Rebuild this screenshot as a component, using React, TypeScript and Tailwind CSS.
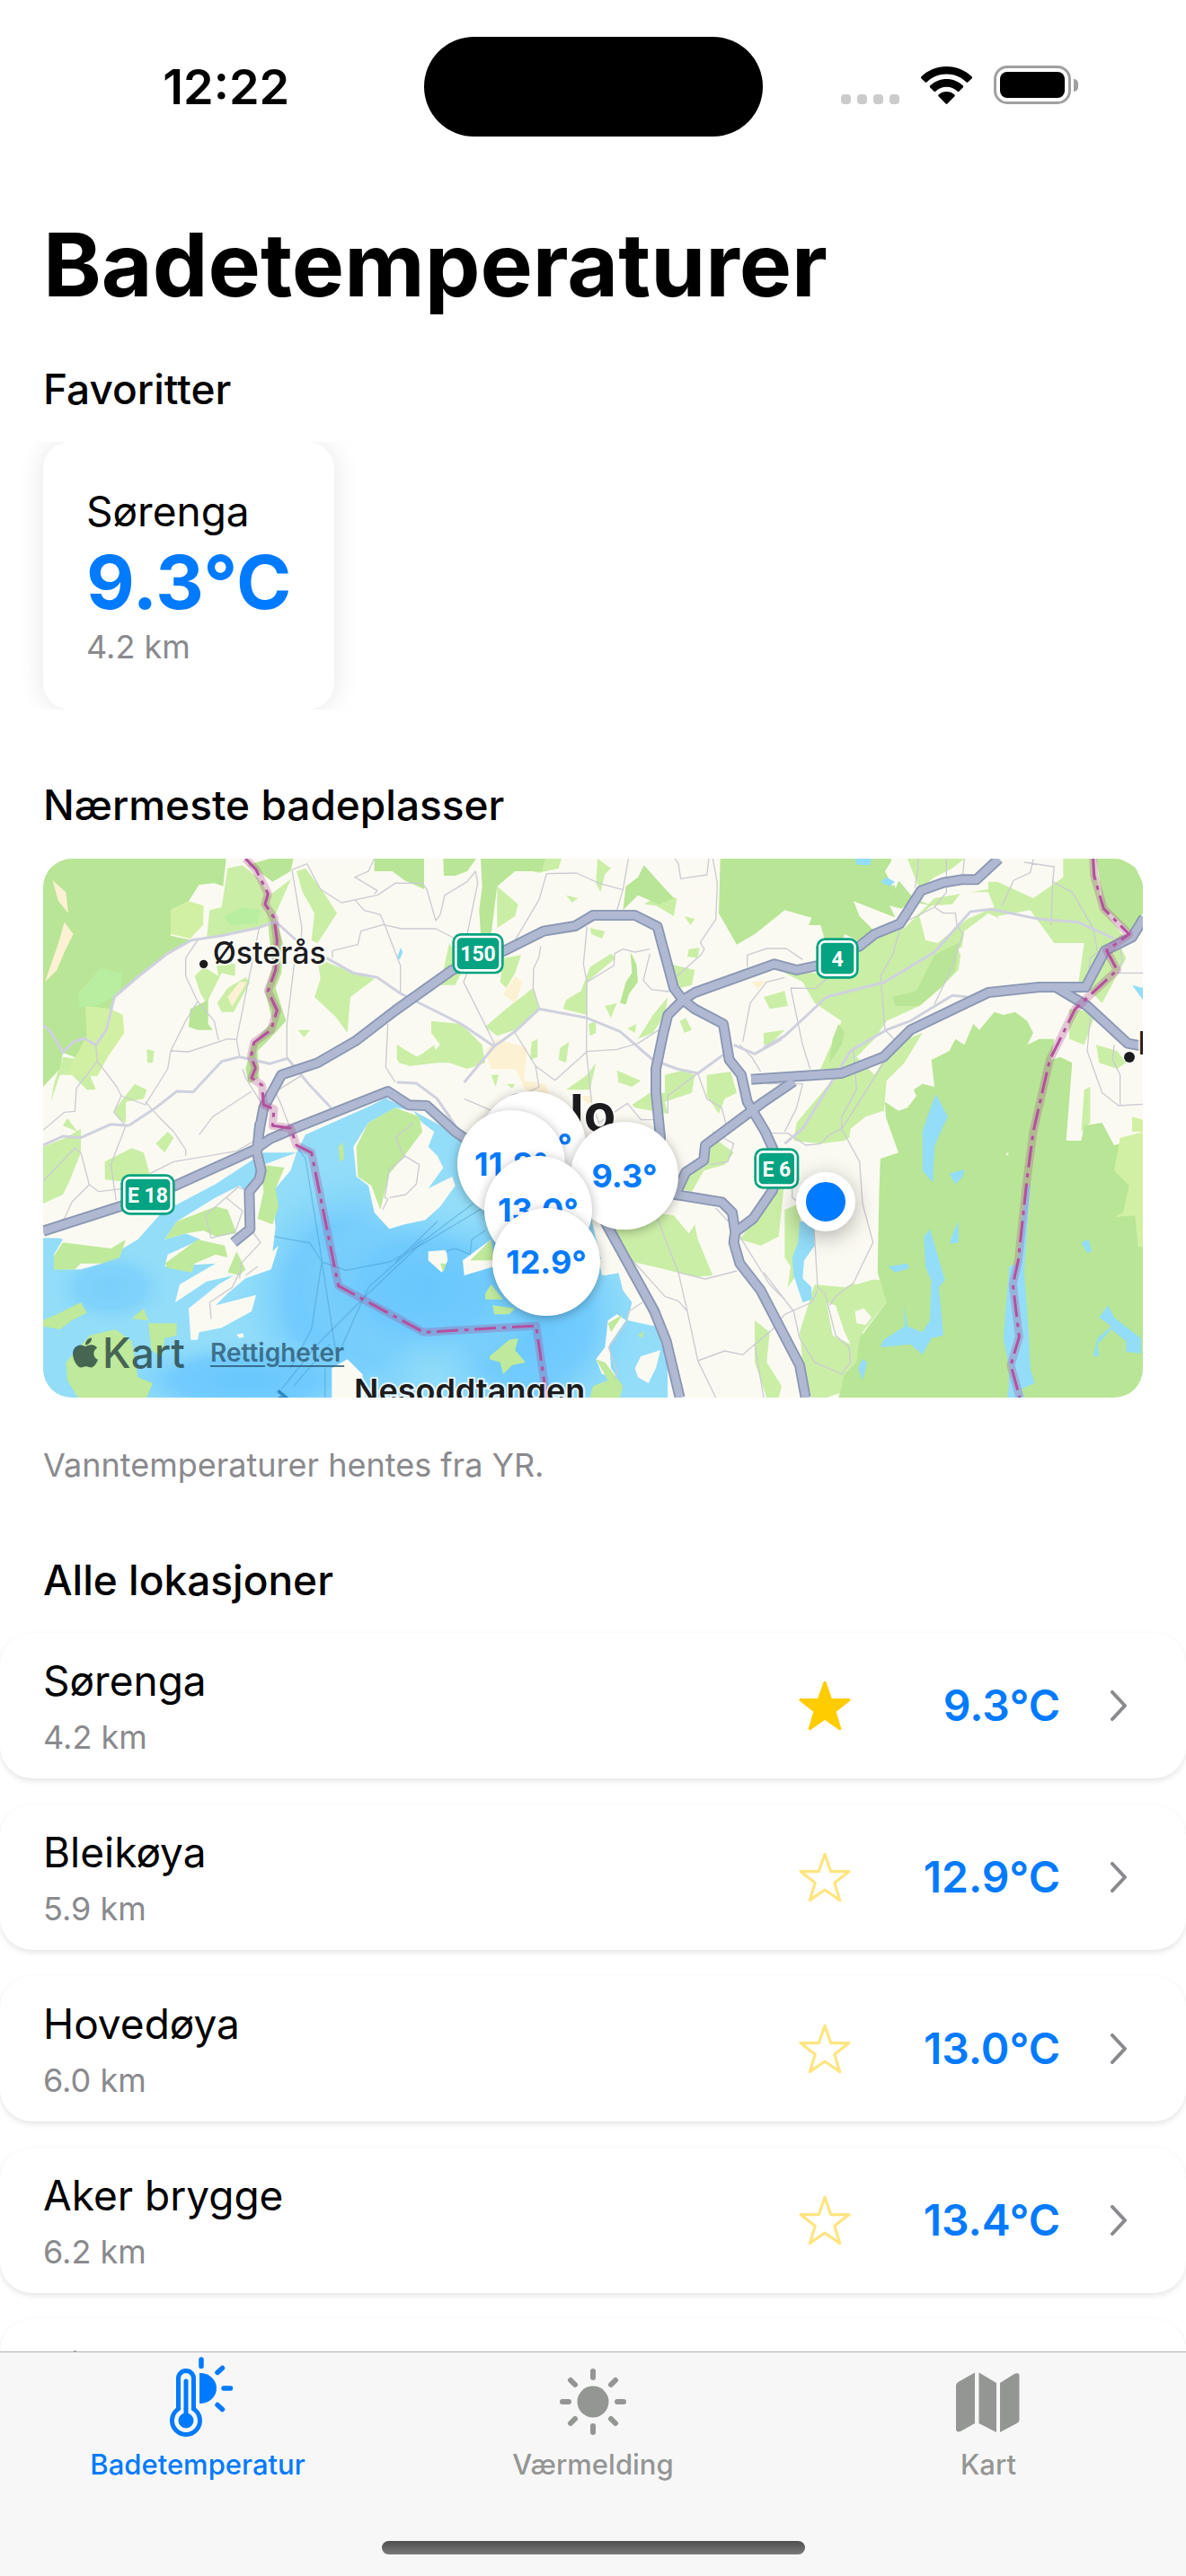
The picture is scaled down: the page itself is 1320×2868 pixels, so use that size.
import { useState } from 'react';
import { FaApple } from 'react-icons/fa';

type Spot = { name: string; distance: string; temp: string };

const spots: Spot[] = [
  { name: 'Sørenga', distance: '4.2 km', temp: '9.3°C' },
  { name: 'Bleikøya', distance: '5.9 km', temp: '12.9°C' },
  { name: 'Hovedøya', distance: '6.0 km', temp: '13.0°C' },
  { name: 'Aker brygge', distance: '6.2 km', temp: '13.4°C' },
  { name: 'Tjuvholmen', distance: '6.6 km', temp: '11.8°C' },
];

// ---- Map data, in map units (three per pixel) ----

const forest = [
  'M24 18H635L625 110 595 100 545 105 510 160 450 190V275L520 290 440 335 262 480 235 590 200 600 150 690 90 665 80 720 24 780Z',
  'M2285 18H2855L2870 120 2880 90 2930 150 2990 175 2920 160 2890 185 2850 175 2870 215 2730 160 2750 210 2800 260 2760 300 2700 270 2680 330 2640 310 2620 240 2580 240 2590 215 2500 190 2450 230 2400 270 2340 305 2320 270 2280 200Z',
  'M2820 1000L2840 930 2835 830 2880 860 2910 850 2940 810 2930 790 2960 770 3000 780 2990 690 3050 660 3070 620 3100 640 3130 570 3150 590 3200 530 3230 540 3270 530 3310 560 3330 600 3310 640 3350 620 3400 620 3390 690 3420 680 3460 700 3440 960 3490 960 3500 910 3560 900 3600 975 3700 950V1818H2680L2700 1740 2740 1700 2750 1620 2840 1500 2810 1400 2815 1150Z',
  'M780 18H860L850 60 790 95 735 55 705 40Z',
  'M1130 18H1296V120L1230 90 1190 60 1130 60Z',
  'M1360 18H1470L1440 60 1400 75 1362 75Z',
  'M1485 18H1700L1690 60 1600 60 1540 110 1530 190 1520 270H1485L1480 190 1490 110Z',
  'M2030 40L2075 90 2130 150 2080 170 2010 140 1960 190 1970 110 2010 80Z',
  'M3540 18H3620L3670 45 3696 100V200L3660 270 3610 220 3565 180Z',
  'M1985 330L2005 370 2010 430 1980 470 1970 505 1950 500 1970 430 1990 400Z',
  'M3000 340L3080 300 3070 390 3020 450 2950 510 2870 510 2860 480 2940 460Z',
  'M2680 570L2700 600 2690 640 2650 700 2660 620Z',
  'M770 190L800 215 825 300 820 400 800 450 835 560 780 620 740 660 745 750 710 770 700 720 720 640 790 560 765 460 790 380Z',
  'M515 520L575 490 575 570 590 590 540 590 510 580Z',
];

const park = [
  'M640 50L690 40 740 80 780 140 860 80 850 90 790 225 740 250 570 285 580 190 620 180Z',
  'M870 60L900 50 960 130 1005 200 940 300 920 290 930 200 890 130Z',
  'M940 350L1010 380 1130 420 1050 480 1040 600 1000 545 930 480 950 420Z',
  'M610 410L560 380 530 410 550 470 570 500 620 400 665 410 665 370 600 360Z',
  'M620 530L660 530 715 430 700 415 640 450 605 500Z',
  'M1620 18H1755L1745 50 1680 65 1620 50Z',
  'M1875 18L1920 50 1900 70 1885 130 1870 100Z',
  'M2080 140L2140 150 2130 210 2070 175 2030 170Z',
  'M1380 300L1430 380 1400 440 1350 440Z M1540 110L1610 170 1600 210 1540 250Z',
  'M1560 350L1620 340 1600 400 1570 450 1550 430Z',
  'M1850 380L1920 335 1935 350 1840 430 1840 540 1760 520 1770 490 1820 460Z',
  'M1500 580L1570 520 1660 450 1680 520 1600 590 1540 610Z',
  'M1320 560L1420 570 1490 640 1500 700 1440 720 1380 700 1290 700 1350 640 1320 600Z',
  'M1210 640L1250 690 1290 670 1330 640 1340 700 1250 710 1210 700Z',
  'M2110 480L2100 540 2060 600 2010 620 2060 540Z',
  'M2100 740L2160 725 2200 740 2190 800 2100 830 2110 870 2000 850 1990 840 2050 800 2100 800Z',
  'M2240 740L2320 730 2340 800 2300 820 2280 870 2240 810Z',
  'M2500 400L2620 400 2700 380 2780 290 2900 250 3000 150 3180 120 3180 95 3210 95 3330 150 3430 80 3430 18H3530L3560 180 3640 290 3560 340 3540 440 3400 430 3380 330 3280 250 3180 200 3100 260 3080 390 3020 450 2950 510 2840 560 2800 620 2700 720 2620 720 2690 560 2600 500 2560 430Z',
  'M2910 18H3100L3060 50 3000 80 2950 120Z',
  'M2430 480L2500 460 2510 510 2450 520Z M2430 600L2500 590 2450 640 2430 640Z',
  'M2640 780L2740 680 2800 740 2860 640 2960 600 2900 700 2840 760 2820 1000 2760 920 2700 960 2620 970 2530 960 2540 900Z',
  'M3500 250L3600 270 3640 350 3560 500 3480 420Z M3450 520L3540 530 3500 640 3450 620Z',
  'M3540 640L3610 660 3640 700 3610 720 3550 700Z M3500 790L3520 780 3520 900 3490 930Z',
  'M24 980L100 950 150 920 150 1000 110 1100 90 1140 24 1170Z',
  'M230 1030L320 985 360 1000 380 1070 330 1100 230 1090Z',
  'M400 970L440 930 460 950 430 1000Z M90 910L105 885 140 930Z M260 860L330 770 370 790 360 820 300 830 300 900 280 890Z',
  'M90 680L160 690 200 790 170 790 120 740 80 740 50 830 60 770Z',
  'M370 655L395 660 390 700 372 700Z M875 590L915 590 895 615Z M1205 640L1290 690 1250 710 1205 690Z',
  'M1990 1240L2060 1200 2130 1210 2180 1270 2200 1240 2210 1290 2260 1410 2200 1415 2060 1380 1970 1360 1930 1260Z',
  'M2250 940L2330 1000 2300 1040 2230 1060 2190 1130 2150 1120 2200 1050Z',
  'M2450 1120L2500 1090 2480 1280 2420 1310 2350 1290 2400 1220Z',
  'M2400 1560L2450 1600 2440 1700 2490 1780 2480 1818H2440L2400 1700Z',
  'M2600 1440L2700 1450 2780 1420 2840 1430 2840 1500 2760 1600 2770 1700 2720 1790 2640 1818H2590L2560 1700 2550 1600Z',
  'M2500 1190L2550 1170 2560 1380 2510 1450 2520 1380 2500 1350Z',
  'M1845 570L1870 560 1870 600 1850 610Z M2150 560L2170 550 2190 590 2165 600Z M1975 585L2005 570 2000 600Z',
  'M1840 740L1870 700 1850 790 1770 790Z M1940 725L2020 760 1990 780 1945 765Z M1750 650L1780 630 1770 700 1745 690Z',
  'M1655 630L1675 620 1675 680 1650 690Z M1520 740L1545 740 1535 780Z M1570 770L1600 770 1590 785Z',
  'M1770 140L1810 150 1790 165Z M1850 250L1900 260 1890 285 1855 270Z M2165 210L2200 220 2185 240Z M2180 320L2215 315 2210 350 2175 345Z',
  'M2120 370L2200 390 2190 440 2150 450Z M1900 510L1940 500 1920 550Z',
];

const meadow = [
  'M450 190L510 160 560 175 558 240 515 285 450 270Z',
  'M165 510L250 520 290 540 295 600 240 680 205 745 100 740 170 610Z',
  'M3700 930L3620 950 3600 1060 3650 1110 3630 1200 3600 1215 3670 1210 3680 1315H3700Z',
  'M3660 880L3696 890V930H3660Z',
];

const clearings = [
  'M2835 60L2860 20 2910 18 2900 80 2860 110Z',
  'M2950 210L2990 175 3060 170 3090 130 3180 130 3200 180 3110 220 3060 260 3010 300 2970 290Z',
  'M3080 320L3140 280 3170 310 3150 370 3100 380Z',
  'M3210 210L3320 190 3400 300 3500 300 3480 440 3370 440 3330 350 3260 280Z',
  'M3240 1000L3250 1002 3240 1010Z M2700 1100L2790 1090 2810 1300 2810 1420 2740 1440 2640 1420 2620 1340 2650 1200Z',
  'M2720 920L2770 880 2830 860 2880 1000 2820 1020 2800 1100 2750 1110 2710 1000Z',
  'M2735 1530L2765 1520 2790 1550 2770 1575 2740 1570Z M2640 1500L2670 1510 2700 1600 2720 1640 2660 1610Z',
];

const sand = [
  'M55 90L100 130 108 200 75 160Z M95 230L125 270 95 330 70 390 30 430 75 300Z',
  'M640 480L680 430 705 430 655 512Z',
  'M1500 660L1540 620 1640 650 1630 760 1700 770 1720 820 1640 800 1600 720 1520 720Z',
  'M1560 470L1600 410 1625 430 1600 500Z M2390 430L2440 425 2410 455Z M1810 810H1860L1850 840Z',
];

const land = [
  'M710 1140L760 1040 870 1000 850 1060 790 1130 800 1250 790 1330 810 1310 785 1390 700 1420 640 1470 600 1510 735 1475 720 1530 620 1585 545 1600 540 1625H517L510 1520 610 1440 660 1410 570 1430 465 1500 480 1440 600 1370 430 1380 440 1340 550 1290 500 1270 430 1290 470 1230 600 1150 680 1110Z',
  'M24 1260L340 1290 290 1320 220 1370 150 1390H60L60 1340 90 1290Z',
  'M1060 980L1070 1080 1110 1110 1130 1200 1180 1255 1230 1240 1300 1225 1350 1180 1400 1110 1390 1080 1310 1120 1360 1050 1340 1010 1310 980 1330 930 1290 900 1260 860 1200 850 1110 900Z',
  'M1310 1330L1370 1325 1375 1360 1355 1400 1310 1360Z M1425 1360L1520 1290 1530 1380 1430 1410Z',
  'M1875 1260L1960 1400 1890 1410 1880 1360 1920 1330 1880 1300Z',
  'M1910 1560L1940 1540 1970 1560 1915 1640 1920 1720 1940 1750 1890 1740 1870 1690 1900 1650Z',
  'M2000 1720L2020 1680 2085 1660 2070 1720 2045 1770 2010 1750Z M988 1720L1040 1690 1090 1740 1100 1818H988Z',
  'M670 1608L690 1603 695 1615 680 1620Z',
];

const islands = [
  'M60 1345L90 1300 250 1320 300 1290 280 1350 220 1370 150 1370 130 1390H60Z',
  'M430 1290L470 1230 600 1180 640 1190 670 1270 600 1280 560 1260 500 1270Z',
  'M430 1370L540 1290 630 1310 640 1350 600 1340 530 1370 520 1400 440 1385Z',
  'M750 1040L830 1050 800 1120 810 1180 790 1240 740 1220 760 1130Z',
  'M1070 980L1110 900 1200 850 1280 880 1290 930 1230 1010 1180 1070 1150 1190 1120 1110 1075 1080Z',
  'M24 1560L70 1540 150 1500 170 1535 120 1560 80 1590 24 1580Z M320 1555L360 1520 375 1560Z M375 1570L470 1570V1610L430 1620 420 1680 385 1660Z',
  'M100 1700L180 1610 265 1590 320 1630 340 1750 390 1770 370 1818H140L105 1760Z',
  'M1500 1470L1520 1440 1560 1490 1500 1490Z M1525 1510L1600 1520 1580 1540 1530 1540Z',
  'M1515 1680L1580 1625 1610 1620 1600 1660 1635 1700 1590 1710 1560 1740 1550 1700 1515 1690Z',
  'M1450 1360L1520 1290 1530 1360Z M1350 1370H1370L1360 1400Z M1910 1570L1960 1540 1920 1600Z',
  'M1870 1690L1900 1700 1960 1780 1950 1818H1850L1860 1780 1910 1760Z M640 1400L670 1330 700 1390 680 1410Z',
  'M1010 980L1025 965 1030 1020 1015 1030Z M2010 1610L2030 1595 2025 1620Z',
];

const lakes = [
  'M1015 900L1170 815 1180 830 1100 900 1060 940 960 930Z',
  'M2735 18H2790L2785 40 2740 38Z M2820 95L2840 80 2868 95 2850 110Z',
  'M2980 870L3005 805 3045 880 3030 910 3000 980 2995 1100 2960 1060V930Z',
  'M3050 1070L3100 1055 3095 1080 3070 1105Z M3065 1260L3080 1230V1300L3050 1305Z',
  'M2965 1280L2985 1255 3010 1340 3035 1425 3015 1450 3030 1610 2990 1620 2960 1675 2920 1640 2820 1650 2830 1625 2900 1580V1510L2910 1580 2960 1600 2985 1560 2990 1430 2970 1380Z',
  'M2845 1380L2910 1370 2915 1385 2870 1400Z M2745 1720L2760 1690 2775 1700 2760 1760Z',
  'M2550 1230H2600L2600 1310 2565 1360 2560 1420 2590 1450 2590 1490 2560 1500 2530 1410 2525 1350 2545 1300Z',
  'M3310 1110H3320L3300 1400 3315 1600 3320 1720 3335 1770 3290 1790 3300 1818H3245L3250 1720 3230 1620 3250 1380 3280 1370 3290 1230Z',
  'M3490 1300L3515 1290 3525 1330 3510 1335Z M3660 440L3696 450V490Z M1205 350L1218 315 1225 330 1215 355Z',
  'M3550 1550L3580 1510 3600 1550 3690 1620V1670L3640 1665 3640 1630 3590 1590 3545 1640 3550 1680 3530 1680 3545 1620 3590 1580Z',
];

const majorStreets = [
  'M24 575L45 590 90 665 125 630 160 618 200 640 235 590 262 480 350 405 440 335 520 290 620 275 740 250 800 228 880 300',
  'M970 350L1060 400 1140 415 1220 470 1300 510 1420 570 1530 645 1600 595 1680 520 1840 550 1950 595 2060 690 2140 720 2210 735 2300 670',
  'M1530 645L1430 765M1205 765L1270 768 1340 820 1400 910',
  'M310 910L400 850 470 795 525 797 620 695 680 680 780 703 840 685 910 770 985 850',
  'M2430 650L2500 610 2640 480 2835 430 3000 330 3120 195 3190 187 3350 220 3480 230 3600 285',
  'M2500 970L2560 920 2720 660 2840 590 2920 560 3060 475 3110 480',
  'M24 975L90 945 150 950 250 905 310 910M2330 640L2400 670 2490 620',
];

const streets = [
  'M24 925L95 865 130 862 135 785 205 695 200 640M205 695L270 780 285 810 365 840 440 720 450 660 510 663 640 620 670 622 745 250M285 810L260 865 300 910 250 1040 268 1160M365 830L410 880 460 930 500 990V1010',
  'M24 1095L130 985 150 1000 178 1107 120 1165 95 1220 24 1260M178 1107L210 1130 290 1120M380 1070L460 1030 670 995 730 960M720 795L590 880 545 940',
  'M450 660L500 560 540 495 500 410 500 350 540 290M540 495L595 560 610 625M670 622L680 680M885 290L888 250 855 55 905 35M905 35L950 120 1020 165 1140 140 1200 100 1290 100',
  'M1130 18L1110 60 1065 80 1140 125 1130 135M1065 155L1095 190 1150 205 1165 240 1217 375V470M990 350V325L1075 305 1085 260 1160 238 1220 252 1335 252 1400 285',
  'M865 350L838 570 838 685M1175 570L1168 715 1200 765M1335 225L1350 205 1365 140 1440 95 1468 60 1475 100 1440 270M1200 100H1290L1305 120 1335 225',
  'M1600 290L1680 155 1705 68 1805 66 1880 100 1960 122 1978 18M1960 122L1940 190M1840 245L1828 370 1840 430 1838 660 1855 830M1840 430L1930 375 1932 335 1960 320 2000 330 2050 320',
  'M1685 310L1680 345 1662 385 1660 450 1682 520M2050 335L2028 425 2055 455 2115 462M2133 18L2145 35 2153 85 2240 72 2247 18M2260 18L2275 100 2270 220 2218 298 2232 320 2220 340 2140 410',
  'M1440 400L1428 430 1533 640M1600 600L1668 710 1680 780 1640 800M1668 710L1733 758 1840 662 1940 655 2010 635 2080 590M1430 820L1500 850 1560 880M1340 820L1385 880M1855 830L1880 900 1975 835 2020 890 2080 890',
  'M2110 870V810L2210 735 2240 820 2290 850 2305 910M2350 640L2390 680 2420 730M2360 630L2385 500 2440 430 2500 415M2375 380V340L2440 318 2505 318 2560 355M2520 450L2560 640 2585 720M2520 450L2600 452 2640 420',
  'M2945 18L2945 50 2935 115M3040 18V130L3000 180 2890 235 2860 340 2820 410 2835 590 2865 620M3000 180L3030 200 3070 200 3075 240 3095 270 3050 400 3000 505M3100 18L3095 70M3300 30L3400 45 3395 95 3390 240M3225 175L3265 90 3320 65 3330 20M3395 95L3460 130 3530 250 3545 330 3520 350 3515 410',
  'M2730 660L2740 790 2690 880 2690 920 2750 1030 2760 1170 2795 1300 2730 1435 2670 1480 2650 1510M2830 700L2730 860 2690 920 2650 940 2620 970 2570 975 2510 935 2440 935M2440 770L2560 770 2540 850 2500 930',
  'M3520 550L3510 660 3560 800 3615 843 3696 838M3600 640L3595 690 3620 740 3620 840M3620 320L3628 360 3610 400 3696 400M2525 1120V1150L2595 1200 2610 1450 2635 1470 2670 1610 2715 1650 2720 1700 2690 1740 2600 1700 2550 1620 2530 1530 2430 1400',
  'M2075 1220L2145 1400 2235 1422 2340 1395M2145 1400L2175 1530 2210 1695 2270 1818M2100 1480L2145 1495 2175 1530M1930 1290L2100 1480M2210 1695L2300 1662 2360 1675 2400 1640M2400 1640L2430 1818M2400 1640L2460 1590 2500 1540 2590 1500 2610 1460M2350 1280L2450 1440 2500 1490',
  'M2260 930L2330 970 2310 1030 2250 1040M2270 1185L2330 1250M1980 1530L2025 1500M1980 1530L1970 1570 1912 1650 1940 1730 1930 1760M740 1380L700 1410M680 1420L685 1370 750 1300 720 1260M585 1555L580 1500 655 1450 680 1400M565 1210L585 1285 665 1265 690 1195 635 1150 675 1115 710 1130M565 1210L635 1150',
  'M1158 1190L1175 1155 1165 1150 1180 1055 1230 1015 1200 950 1260 900M1180 1150L1235 1140 1270 1105 1280 1040 1230 1010M800 800L815 830 850 920 880 910M690 720L700 750 750 830M810 790L890 740',
];

const ferries = [
  'M870 980L900 1020 955 1360 920 1590 850 1720M795 1280L915 1302 955 1365 1035 1393 1180 1365 1300 1300 1500 1180M955 1365L1005 1690M1020 1650L1110 1450 1290 1290M1365 1330L1400 1320 1450 1340 1455 1290 1500 1260M1340 1230L1200 1365',
  'M820 1790L940 1640 1110 1470 1300 1290 1460 1170M860 1780L980 1640M965 1818V1720',
];

const highways = [
  'M24 1262L280 1180 470 1108 730 990 780 955 860 920 1175 795 1245 841 1305 843 1400 930 1500 1000',
  'M745 930L760 850 820 740 940 700 1070 625 1200 525 1390 390 1565 325 1695 260 1800 243 1860 207H2000L2075 245 2130 450 2160 490 2200 520 2295 570 2315 690 2355 740 2375 830 2435 930 2460 985 2480 1060 2460 1125 2395 1220 2335 1265 2330 1300 2350 1370 2420 1460 2550 1710 2570 1818',
  'M2160 490L2200 465 2465 370 2540 390 2610 375 2750 310 2800 270 2885 235 2955 125 3030 98 3090 88H3140L3215 18',
  'M2160 490L2110 540 2095 600 2070 720V800L2085 950 2080 1010',
  'M2388 755L2690 735 2830 680 2920 590 3180 465 3350 447 3505 447 3570 325 3660 280 3700 215',
  'M2530 762L2430 830 2390 860 2235 975 2230 1025 2170 1065 2135 1140 2290 1165 2325 1200 2335 1265',
  'M3410 450L3510 510 3645 635 3700 645',
  'M748 900L738 1000 752 1060 745 1090 712 1130 715 1255 660 1300',
  'M1900 1230L2065 1530 2105 1630 2150 1818',
];

const borders = [
  'M700 18L735 55 775 135 765 170 795 215 805 290 800 390 775 460 805 525 785 590 728 632 718 680 733 717 720 750 755 775 760 840 795 855 790 910 850 918 870 975 920 1000 1010 1445 1295 1600 1670 1578 1705 1818',
  'M3530 18L3533 75 3565 185 3650 270 3575 325 3610 390 3470 520 3385 690 3330 930 3310 1080 3280 1360 3262 1440 3283 1615 3255 1710 3285 1818',
];

const shields = [
  { label: '150', x: 1390, y: 267, w: 172 },
  { label: 'E 18', x: 283, y: 1072, w: 181 },
  { label: '4', x: 2605, y: 283, w: 142 },
  { label: 'E 6', x: 2398, y: 985, w: 150 },
];

const pins = [
  { label: '13.4°', place: 'left-[484px] top-[259px]' },
  { label: '11.8°', place: 'left-[461px] top-[280px]' },
  { label: '9.3°', place: 'left-[587px] top-[293px]' },
  { label: '13.0°', place: 'left-[491px] top-[331px]' },
  { label: '12.9°', place: 'left-[500px] top-[389px]' },
];

const MapDrawing = () => (
  <svg
    viewBox="24 18 3672 1800"
    preserveAspectRatio="xMidYMid slice"
    className="block h-full w-full"
    fill="none"
    strokeLinejoin="round"
    fontFamily="Inter, sans-serif"
  >
    <defs>
      <radialGradient id="deep">
        <stop offset="0" stopColor="#69c7fd" />
        <stop offset="0.5" stopColor="#6fcafd" stopOpacity="0.9" />
        <stop offset="1" stopColor="#93ddf9" stopOpacity="0" />
      </radialGradient>
      <clipPath id="fjord">
        <path d="M24 1285L340 1290 420 1200 600 1105 760 1000 870 1000 900 940 1170 820 1260 860 1400 935 1700 1050 1850 1200 1880 1330 1900 1410 1945 1400 1960 1460 1990 1500 1975 1560 2070 1580 2110 1700 2110 1818H24Z" />
      </clipPath>
    </defs>
    <rect x="24" y="18" width="3672" height="1800" fill="#fbfaf2" />
    {park.map((d) => <path key={d} d={d} fill="#caeea6" />)}
    {forest.map((d) => <path key={d} d={d} fill="#b9e596" />)}
    {meadow.map((d) => <path key={d} d={d} fill="#d2f0a3" />)}
    {clearings.map((d) => <path key={d} d={d} fill="#fbfaf2" />)}
    <path d="M140 470L215 385 290 400 280 470 200 510 145 515Z M625 210L690 180 750 190 740 235 650 240Z" fill="#b9eea0" />
    {sand.map((d) => <path key={d} d={d} fill="#fdf1d3" />)}

    {/* Fjord with deeper water in the middle */}
    <g clipPath="url(#fjord)">
      <rect x="24" y="780" width="2200" height="1040" fill="#93ddf9" />
      <ellipse cx="1050" cy="1480" rx="420" ry="480" fill="url(#deep)" />
      <ellipse cx="1640" cy="1560" rx="420" ry="420" fill="url(#deep)" />
      <ellipse cx="1300" cy="1450" rx="420" ry="300" fill="url(#deep)" />
      <ellipse cx="250" cy="1450" rx="220" ry="140" fill="url(#deep)" opacity="0.6" />
      <ellipse cx="700" cy="1760" rx="480" ry="150" fill="url(#deep)" />
    </g>
    {land.map((d) => <path key={d} d={d} fill="#fbfaf2" />)}
    {islands.map((d) => <path key={d} d={d} fill="#bfe99b" />)}
    {lakes.map((d) => <path key={d} d={d} fill="#93ddf9" />)}
    {ferries.map((d) => <path key={d} d={d} stroke="#3f8fc4" strokeOpacity="0.4" strokeWidth="4" />)}

    {streets.map((d) => <path key={d} d={d} stroke="#cbcbd3" strokeWidth="4" />)}
    {majorStreets.map((d) => <path key={d} d={d} stroke="#cfd1df" strokeWidth="9" />)}
    {highways.map((d) => <path key={d} d={d} stroke="#8a97b4" strokeWidth="36" />)}
    {highways.map((d) => <path key={d} d={d} stroke="#b0b9d1" strokeWidth="25" />)}
    {borders.map((d) => (
      <g key={d}>
        <path d={d} stroke="#a8468e" strokeOpacity="0.28" strokeWidth="27" />
        <path d={d} stroke="#b4509f" strokeWidth="9" strokeDasharray="72 20 14 20" />
      </g>
    ))}

    {shields.map((s) => (
      <g key={s.label}>
        <rect x={s.x} y={s.y} width={s.w} height="136" rx="30" fill="#04a381" />
        <rect x={s.x + 12} y={s.y + 12} width={s.w - 24} height="112" rx="18" stroke="#fff" strokeWidth="8" />
        <text
          x={s.x + s.w / 2}
          y={s.y + 94}
          textAnchor="middle"
          fontFamily="Roboto, sans-serif"
          fontWeight="700"
          fontSize="69"
          fill="#fff"
        >
          {s.label}
        </text>
      </g>
    ))}

    {/* Place names */}
    <g fill="#1c1c1e" stroke="#fff" strokeOpacity="0.8" strokeWidth="12" paintOrder="stroke">
      <circle cx="560" cy="370" r="14" strokeWidth="6" />
      <text x="590" y="368" fontSize="102" fontWeight="500">Østerås</text>
      <text x="1448" y="1832" textAnchor="middle" fontSize="108" fontWeight="600">Nesoddtangen</text>
      <text x="1936" y="930" textAnchor="end" fontSize="174" fontWeight="700">Oslo</text>
      <circle cx="3651" cy="681" r="18" strokeWidth="6" />
      <text x="3680" y="672" fontSize="105" fontWeight="700">Lørenskog</text>
    </g>
    <text transform="translate(862 1826) rotate(-50)" textAnchor="end" fontSize="84" fontWeight="600" fill="#2c8ac4">d</text>
  </svg>
);

const StatusBar = () => (
  <header className="grid grid-cols-[1fr_377px_1fr] items-center pt-[41px]">
    <time className="pl-8 text-center text-[54px] font-semibold leading-[60px]">12:22</time>
    <div className="h-[111px] rounded-full bg-black" />
    <div className="flex items-end justify-center gap-6 pr-8 pb-1">
      <div className="flex gap-[7px]">
        {[0, 1, 2, 3].map((dot) => (
          <span key={dot} className="h-[11px] w-[11px] rounded-[4px] bg-[#cbcbcb]" />
        ))}
      </div>
      <svg viewBox="0 0 57 42" className="h-[42px] w-[57px]">
        <path d="M28.500 0C39.500 0 49.500 4.300 56.500 11.300a1.500 1.500 0 0 1 0 2.200L52.500 17.300a1.600 1.600 0 0 1-2.200 0C44.500 11.800 37 8.500 28.500 8.500S12.500 11.800 6.700 17.300a1.600 1.600 0 0 1-2.200 0L.500 13.500a1.500 1.500 0 0 1 0-2.200C7.500 4.300 17.500 0 28.500 0Z" />
        <path d="M28.500 14C35.500 14 42 16.700 46.700 21.300a1.500 1.500 0 0 1 0 2.200L42.600 27.400a1.600 1.600 0 0 1-2.200 0C37.300 24.500 33 22.700 28.500 22.700S19.700 24.500 16.600 27.400a1.600 1.600 0 0 1-2.200 0L10.300 23.500a1.500 1.500 0 0 1 0-2.200C15 16.700 21.500 14 28.500 14Z" />
        <path d="M28.500 28C32 28 35 29.200 37.200 31.300a1.500 1.500 0 0 1 0 2.200L29.600 41.200a1.500 1.500 0 0 1-2.200 0L19.800 33.500a1.500 1.500 0 0 1 0-2.200C22 29.200 25 28 28.500 28Z" />
      </svg>
      <div className="flex items-center gap-[3px]">
        <div className="h-[43px] w-[86px] rounded-[15px] border-[3px] border-[#a0a0a0] p-1">
          <div className="h-full rounded-[8px] bg-black" />
        </div>
        <span className="h-[14px] w-[5px] rounded-r-full bg-[#a0a0a0]" />
      </div>
    </div>
  </header>
);

const StarIcon = ({ filled }: { filled: boolean }) => (
  <svg viewBox="0 0 56 54" className="h-[58px] w-[60px]" strokeWidth="3" strokeLinejoin="round">
    <path
      d="M28 3L34.200 21H53.200L38.100 32.800 43.600 50.900 28 40.100 12.400 50.900 17.900 32.800 2.800 21H21.800Z"
      className={filled ? 'fill-[#ffcc00] stroke-[#ffcc00]' : 'fill-none stroke-[#ffe580]'}
    />
  </svg>
);

const SpotRow = ({ spot, favorite, onToggle }: { spot: Spot; favorite: boolean; onToggle: () => void }) => (
  <li className="flex items-center gap-14 rounded-[36px] bg-white pt-6 pr-[66px] pb-6 pl-12 shadow-[0_3px_6px_rgba(0,0,0,0.1)]">
    <a href="#" className="flex flex-1 flex-col gap-3">
      <span className="text-[46px] leading-[58px]">{spot.name}</span>
      <span className="text-[36px] leading-[44px] text-[#8a8a8e]">{spot.distance}</span>
    </a>
    <button type="button" aria-label={`Favoritt ${spot.name}`} aria-pressed={favorite} onClick={onToggle}>
      <StarIcon filled={favorite} />
    </button>
    <span className="w-[176px] text-right text-[48px] font-semibold leading-[58px] text-[#007aff]">{spot.temp}</span>
    <svg viewBox="0 0 18 34" className="h-[34px] w-[18px]" fill="none" stroke="#8a8a8e" strokeWidth="4" strokeLinecap="round" strokeLinejoin="round">
      <path d="M2 2L16 17 2 32" />
    </svg>
  </li>
);

const ThermometerIcon = () => (
  <svg viewBox="0 0 96 96" className="h-24 w-24 overflow-visible" fill="none" stroke="currentColor" strokeLinecap="round">
    <path d="M26.500 56V22a8.500 8.500 0 0 1 17 0V56a15.500 15.500 0 1 1-17 0Z" strokeWidth="5" />
    <path d="M35 25V66" strokeWidth="5" />
    <circle cx="35" cy="69" r="8.500" fill="currentColor" stroke="none" />
    <path d="M50 16C61 16 69 23.500 69 33S61 50 50 50Z" fill="currentColor" stroke="none" />
    <path d="M52 1V8.500M77 33H84.500M70 15.500L75.500 10.500M70 51.500L75.500 56.500" strokeWidth="5.500" />
  </svg>
);

const SunIcon = () => (
  <svg viewBox="0 0 96 96" className="h-24 w-24" fill="none" stroke="currentColor" strokeWidth="6" strokeLinecap="round">
    <circle cx="48" cy="48" r="17.500" fill="currentColor" stroke="none" />
    <path d="M48 14V21M48 75V82M14 48H21M75 48H82M23 24L28 29M68 67L73 72M23 72L28 67M68 29L73 24" />
  </svg>
);

const MapIcon = () => (
  <svg viewBox="0 0 96 96" className="h-24 w-24" fill="currentColor">
    <path d="M12 30Q12 27.500 14.500 26L33 15.500V72L17.500 80.700Q12 83 12 78Z" />
    <path d="M37.500 15.500L57 27V82L37.500 72Z" />
    <path d="M61 27L77 17Q82.500 14.500 82.500 19.500V68Q82.500 70 80.500 71.500L61 82Z" />
  </svg>
);

const tabs = [
  { label: 'Badetemperatur', Icon: ThermometerIcon },
  { label: 'Værmelding', Icon: SunIcon },
  { label: 'Kart', Icon: MapIcon },
];

const App = () => {
  const [favorites, setFavorites] = useState(['Sørenga']);
  const [activeTab, setActiveTab] = useState('Badetemperatur');

  const toggle = (name: string) =>
    setFavorites((list) => (list.includes(name) ? list.filter((n) => n !== name) : [...list, name]));

  return (
    <div className="flex h-screen flex-col overflow-hidden bg-white font-[Inter,sans-serif] text-black">
      <StatusBar />

      <main className="min-h-0 flex-1 overflow-hidden">
        <h1 className="mt-[83px] px-12 text-[98px] font-bold leading-[120px]">Badetemperaturer</h1>

        {/* Favorites */}
        <h2 className="mt-12 px-12 text-[46px] font-medium leading-[60px]">Favoritter</h2>
        <div className="mt-[29px] flex gap-6 overflow-hidden px-12">
          {spots.filter((s) => favorites.includes(s.name)).map((s) => (
            <article key={s.name} className="rounded-[30px] bg-white p-12 shadow-[0_0_30px_rgba(0,0,0,0.1)]">
              <p className="text-[46px] leading-[58px]">{s.name}</p>
              <p className="text-[83px] font-bold leading-[100px] text-[#007aff]">{s.temp}</p>
              <p className="text-[36px] leading-[44px] text-[#8a8a8e]">{s.distance}</p>
            </article>
          ))}
        </div>

        {/* Map */}
        <h2 className="mt-[76px] px-12 text-[46px] font-medium leading-[60px]">Nærmeste badeplasser</h2>
        <div className="relative mx-12 mt-[30px] h-[600px] overflow-hidden rounded-[32px]">
          <MapDrawing />
          {pins.map((pin) => (
            <button
              key={pin.label}
              type="button"
              className={`absolute flex h-[120px] w-[120px] items-center justify-center rounded-full bg-white text-[36px] font-bold leading-[44px] text-[#007aff] shadow-[0_2px_12px_rgba(0,0,0,0.3)] ${pin.place}`}
            >
              {pin.label}
            </button>
          ))}
          <span className="absolute top-[349px] left-[838px] h-[66px] w-[66px] rounded-full border-[11px] border-white bg-[#007aff] shadow-[0_6px_24px_rgba(0,0,0,0.3)]" />
          <div className="absolute bottom-[22px] left-7 flex items-center gap-7 text-[#1f3a3a]/75">
            <span className="flex items-center text-[46px] font-medium leading-[56px]">
              <FaApple className="h-[38px] w-[38px]" />
              Kart
            </span>
            <a href="#" className="text-[28px] font-semibold leading-[32px] text-[#2b5670]/80 underline decoration-2 underline-offset-4">
              Rettigheter
            </a>
          </div>
        </div>
        <p className="mt-[53px] px-12 text-[36px] leading-[44px] text-[#8a8a8e]">Vanntemperaturer hentes fra YR.</p>

        {/* All locations */}
        <h2 className="mt-[76px] px-12 text-[46px] font-medium leading-[60px]">Alle lokasjoner</h2>
        <ul className="mt-[29px] flex flex-col gap-[29px]">
          {spots.map((s) => (
            <SpotRow key={s.name} spot={s} favorite={favorites.includes(s.name)} onToggle={() => toggle(s.name)} />
          ))}
        </ul>
      </main>

      <nav className="border-t border-[#b0b0b0] bg-[#f7f7f7] pt-[7px] pb-6">
        <div className="grid grid-cols-3">
          {tabs.map(({ label, Icon }) => (
            <button
              key={label}
              type="button"
              onClick={() => setActiveTab(label)}
              className={`flex flex-col items-center gap-1 text-[31px] font-medium leading-[36px] ${
                activeTab === label ? 'text-[#007aff]' : 'text-[#949694]'
              }`}
            >
              <Icon />
              {label}
            </button>
          ))}
        </div>
        <div className="mx-auto mt-[67px] h-[15px] w-[471px] rounded-full bg-linear-to-b from-[#4f4f4f] to-[#7a7a7a]" />
      </nav>
    </div>
  );
};

export default App;
